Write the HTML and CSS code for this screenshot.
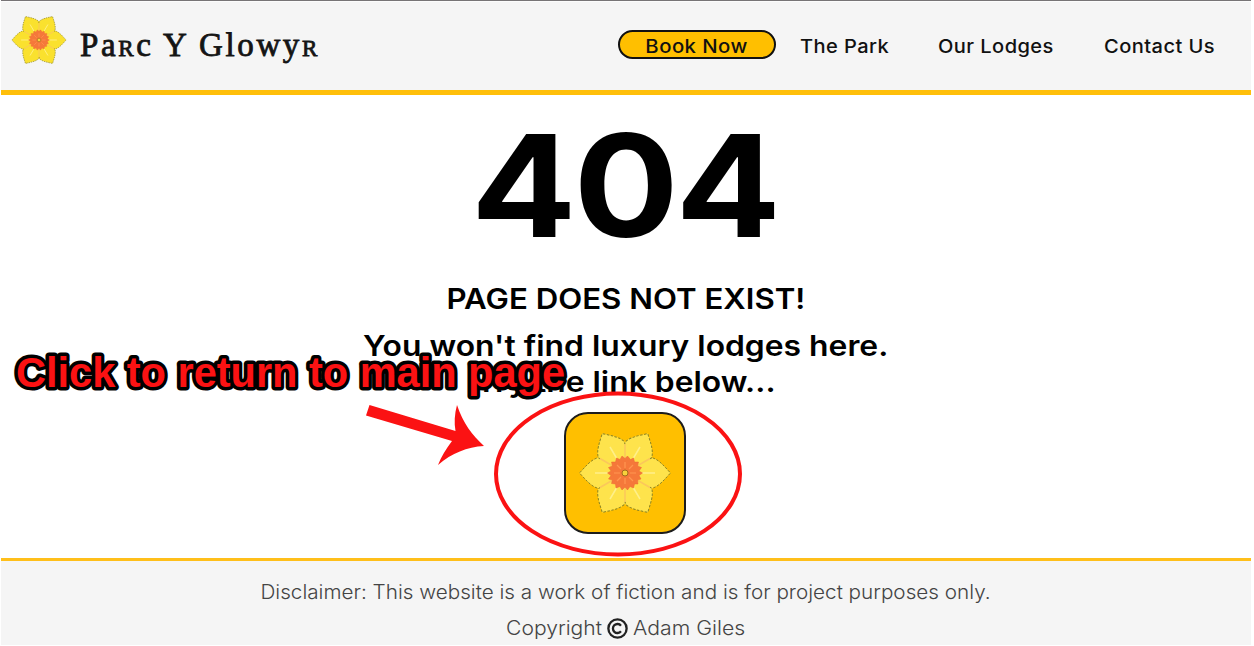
FILE: index.html
```html
<!DOCTYPE html>
<html lang="en">
<head>
<meta charset="utf-8">
<title>Parc Y Glowyr - 404</title>
<link rel="stylesheet" href="styles.css">
</head>
<body>
<svg class="defs" width="0" height="0" aria-hidden="true">
  <defs>
    <path id="petal" d="M0 0L26.5 -15.5C34 -13.5 39 -7 45.5 0C39 7 34 13.5 26.5 15.5Z"/>
    <symbol id="daffodil" viewBox="-47 -42 94 84">
      <g class="petals">
        <use href="#petal"/><use href="#petal" transform="rotate(60)"/><use href="#petal" transform="rotate(120)"/>
        <use href="#petal" transform="rotate(180)"/><use href="#petal" transform="rotate(240)"/><use href="#petal" transform="rotate(300)"/>
      </g>
      <path class="cover" d="M25 -14.500V14.500L0 29L-25 14.500V-14.500L0 -29Z"/>
      <path class="seams" d="M0 -29V29M-25 -14.5L25 14.5M-25 14.5L25 -14.5"/>
      <path class="veins" d="M17 0H30M-17 0H-30M8.500 -15L15 -26M-8.500 -15L-15 -26M8.500 15L15 26M-8.500 15L-15 26"/>
      <path class="trumpet" d="M0 -14.500L2.500 -17L5.500 -13.500L8.500 -15L9.500 -11L13.500 -11L12.500 -7L16.500 -5.500L14 -2L17.500 0L14 2.500L16 6L12.500 7L13 11L9.500 11L8.500 15L5 13.500L2.500 17L0 14L-3 17L-5 13.500L-9 15L-9.500 11L-13.500 10.500L-12.500 7L-16.500 6L-14 2.500L-17.500 0L-14 -2L-16.500 -5.500L-12.500 -7L-13.500 -11L-9.500 -11L-8.500 -15L-5 -13.500L-3 -17Z"/>
      <path class="rays" d="M0 -11V-5M0 11V5M-11 0H-5M11 0H5M-8 -8L-4 -4M8 -8L4 -4M-8 8L-4 4M8 8L4 4"/>
      <circle class="stamen" r="3"/>
    </symbol>
  </defs>
</svg>
<div class="page">
  <header class="header">
    <a class="brand">
      <svg class="brand-flower"><use href="#daffodil"/></svg>
      <span class="brand-name">Pa<span class="sc">r</span>c Y Glowy<span class="sc">r</span></span>
    </a>
    <nav class="nav">
      <a class="book"><span>Book Now</span></a>
      <a class="park"><span>The Park</span></a>
      <a class="lodges"><span>Our Lodges</span></a>
      <a class="contact"><span>Contact Us</span></a>
    </nav>
  </header>
  <main class="main">
    <h1 class="code">404</h1>
    <h2 class="missing">PAGE DOES NOT EXIST!</h2>
    <p class="hint"><span class="hint-a">You won't find luxury lodges here.</span><span class="hint-b">Try the link below...</span></p>
    <a class="home"><svg class="home-flower"><use href="#daffodil"/></svg></a>
  </main>
  <footer class="footer">
    <p class="disclaimer">Disclaimer: This website is a work of fiction and is for project purposes only.</p>
    <p class="copyright"><span class="copy-word">Copyright</span>
      <svg class="copy-icon" viewBox="0 0 20 20"><circle cx="10" cy="10" r="8.700"/><path d="M13.300 7.300A4.300 4.300 0 1 0 13.300 12.700"/></svg>
      <span class="copy-owner">Adam Giles</span></p>
  </footer>
</div>
<svg class="annotation" viewBox="0 0 1254 646">
  <ellipse cx="618" cy="474" rx="122" ry="80.500"/>
  <path d="M369.500 405L455.500 431C454 423 454.500 414 457 405C463 423 472 435 484 446C467 447 452 453 438 465C441 457 446 449 452 441L366 415.500Z"/>
  <text x="16" y="387" textLength="549" lengthAdjust="spacingAndGlyphs">Click to return to main page</text>
</svg>
</body>
</html>
```

FILE: styles.css
```css
* { box-sizing: border-box; }
body { margin: 0; background: #fff; overflow: hidden; font-family: Inter, "Noto Sans", sans-serif; color: #000; }
h1, h2, p { margin: 0; }
.defs { position: absolute; }
.page { width: 1250px; height: 645px; margin-left: 1px; display: flex; flex-direction: column; border-top: 1px solid #777476; }

.header { height: 94px; flex: none; display: flex; justify-content: space-between; background: #f5f5f5; border-top: 1px solid #fcfcfc; border-bottom: 5px solid #ffbf0a; padding: 12px 37px 0 10px; }
.brand { display: flex; align-items: flex-start; color: #fae12e; }
.brand-flower { width: 56px; height: 52px; }
.brand-name { margin: 11px 0 0 13px; font: 33px/40px "Liberation Serif", serif; color: #141414; letter-spacing: 2.600px; white-space: nowrap; -webkit-text-stroke: .8px #141414; }
.sc { font-variant: small-caps; }
.nav { display: flex; align-items: flex-start; padding-top: 16px; font-size: 18.500px; font-weight: 500; line-height: 33px; color: #111; white-space: nowrap; }
.nav a { display: block; letter-spacing: .4px; }
.nav span { display: inline-block; transform: scaleX(1.085); transform-origin: left; }
.nav .book { width: 158px; height: 29px; line-height: 28px; text-align: center; background: #ffbf00; border: 2.500px solid #111; border-radius: 15px; margin-right: 24px; }
.nav .book span { transform: scaleX(1.1); transform-origin: center; }
.nav .park { width: 138px; }
.nav .lodges { width: 166px; }
.nav .contact { width: 110px; }

.main { flex: 1; display: flex; flex-direction: column; align-items: center; }
.code { font-size: 142px; line-height: 150px; font-weight: 700; margin-top: 15px; height: 150px; letter-spacing: -3px; transform: translateX(-2px) scaleX(1.1); }
.missing { font-size: 28.500px; line-height: 36px; font-weight: 600; margin-top: 21px; transform: scaleX(1.095); }
.hint { display: flex; flex-direction: column; align-items: center; font-size: 28.500px; line-height: 36px; font-weight: 600; margin-top: 11px; white-space: nowrap; transform: translateX(-.5px) scaleX(1.117); }
.home { width: 122px; height: 122px; margin: 12px 2px 0 0; display: flex; align-items: center; justify-content: center; background: #ffbf00; border: 2px solid #1c1c1c; border-radius: 24px; color: #fee34c; }
.home-flower { width: 94px; height: 84px; }

.petals { fill: currentColor; stroke: #8b8424; stroke-width: 1; stroke-dasharray: 2.500 1.500; }
.cover { fill: currentColor; }
.seams { stroke: #fbc75b; stroke-width: 1.500; fill: none; }
.veins { stroke: #fff08a; stroke-width: 1.500; }
.trumpet { fill: #f5783a; stroke: #ed6833; stroke-width: .5; }
.rays { stroke: #ff9650; stroke-width: 1.200; }
.stamen { fill: #f7d23c; stroke: #a06a1e; stroke-width: 1; }

.footer { height: 87px; flex: none; background: #f5f5f5; border-top: 3px solid #ffbf1a; padding-top: 14px; text-align: center; font-size: 19.500px; line-height: 34px; font-weight: 300; color: #444; white-space: nowrap; }
.disclaimer { transform: translateX(-.5px) scaleX(1.061); }
.copyright { display: flex; justify-content: center; align-items: center; gap: 5px; margin-top: 2px; padding-right: 2px; }
.copy-word { width: 96px; text-align: right; transform: scaleX(1.08); transform-origin: right; }
.copy-owner { width: 112px; text-align: left; transform: scaleX(1.09); transform-origin: left; }
.copy-icon { width: 21px; height: 21px; fill: none; stroke: #222; stroke-width: 2.200; }

.annotation { position: absolute; left: 0; top: 0; width: 1254px; height: 646px; pointer-events: none; }
.annotation ellipse { fill: none; stroke: #fb1213; stroke-width: 4; }
.annotation path { fill: #fb1213; }
.annotation text { font: bold 42px "Liberation Sans", Arial, sans-serif; fill: #fb1213; stroke: #000; stroke-width: 7; stroke-linejoin: round; paint-order: stroke; }
```
